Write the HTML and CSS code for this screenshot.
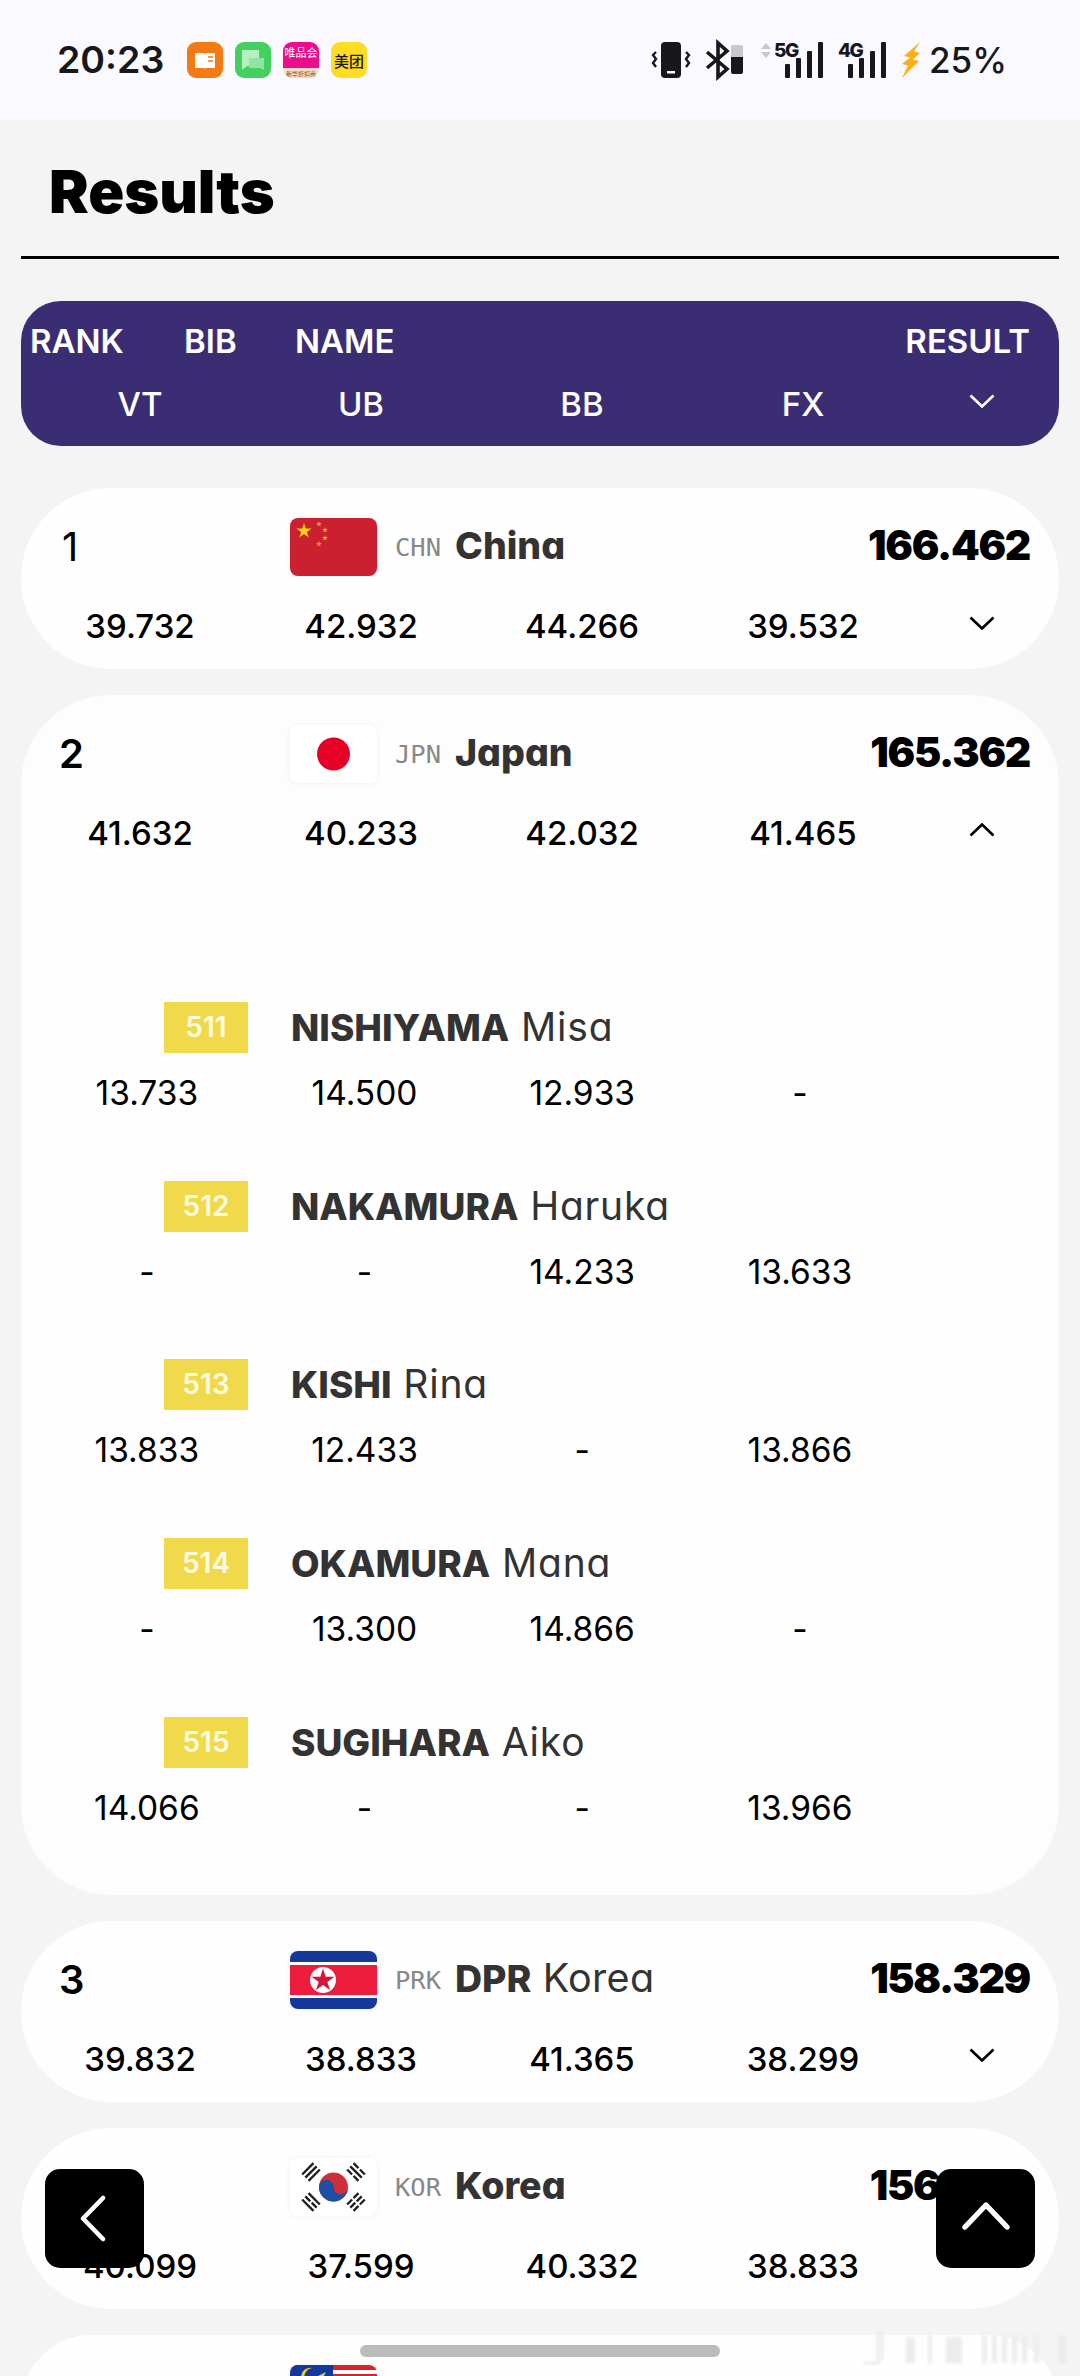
FILE: index.html
```html
<!DOCTYPE html>
<html lang="en">
<head>
<meta charset="utf-8">
<title>Results</title>
<link rel="stylesheet" href="styles.css">
</head>
<body>
<div class="screen">
  <header class="status">
    <span class="time">20:23</span>
    <div class="apps">
      <span class="app app-book">
        <svg width="36" height="36" viewBox="0 0 36 36"><path d="M8 11h9l1 1 1-1h9v15h-9l-1 1-1-1H8z" fill="#fff"/><path d="M21 15h5M21 19h5" stroke="#f47a12" stroke-width="1.6"/></svg>
      </span>
      <span class="app app-msg">
        <svg width="36" height="36" viewBox="0 0 36 36"><path d="M7 8h17v16H12l-5 4z" fill="#b8eec4"/><path d="M14 16h15v12l-4-2H14z" fill="#8fe5a2"/></svg>
      </span>
      <span class="app app-vip"><span class="vip-top">唯品会</span><span class="vip-bottom">新华折扣商</span></span>
      <span class="app app-mt">美团</span>
    </div>
    <div class="sys">
      <svg class="sys-vib" width="38" height="36" viewBox="0 0 38 36"><rect x="9" y="0" width="20" height="36" rx="4" fill="#18181c"/><rect x="15" y="29" width="8" height="2.5" fill="#fff"/><path d="M4 10l-3 3 3 4-3 4 3 4M34 10l3 3-3 4 3 4-3 4" fill="none" stroke="#18181c" stroke-width="2.4"/></svg>
      <svg class="sys-bt" width="38" height="36" viewBox="0 0 38 36"><path d="M1 10l20 17-9 8V1l9 8L1 26" fill="none" stroke="#18181c" stroke-width="3.6"/><path d="M25 5a2 2 0 0 1 2-2h8a2 2 0 0 1 2 2v10H25z" fill="#c8c8cc"/><path d="M25 15h12v15a2 2 0 0 1-2 2h-8a2 2 0 0 1-2-2z" fill="#18181c"/></svg>
      <svg class="sys-net" width="64" height="36" viewBox="0 0 64 36"><path d="M0 7l5-6 5 6zM0 10l5 6 5-6z" fill="#c8c8cc"/><text x="13" y="15" class="net-label">5G</text><rect x="24" y="22" width="5" height="14" rx="1" fill="#18181c"/><rect x="35" y="16" width="5" height="20" rx="1" fill="#18181c"/><rect x="46" y="9" width="5" height="27" rx="1" fill="#18181c"/><rect x="57" y="0" width="5" height="36" rx="1" fill="#18181c"/></svg>
      <svg class="sys-net2" width="50" height="36" viewBox="0 0 50 36"><text x="0" y="15" class="net-label">4G</text><rect x="10" y="22" width="5" height="14" rx="1" fill="#18181c"/><rect x="21" y="16" width="5" height="20" rx="1" fill="#18181c"/><rect x="32" y="9" width="5" height="27" rx="1" fill="#18181c"/><rect x="43" y="0" width="5" height="36" rx="1" fill="#18181c"/></svg>
      <svg class="sys-bolt" width="20" height="36" viewBox="0 0 20 36"><path d="M19 0L3 14l6 1.5L1 22l6 1.5L1 36l17-17-6-1.5 7-6.5-6-1.5z" fill="#fbb018"/></svg>
      <span class="battery">25%</span>
    </div>
  </header>

  <main class="page">
    <h1 class="title">Results</h1>
    <hr class="rule">

    <section class="table-head">
      <div class="head-top"><span>RANK</span><span>BIB</span><span>NAME</span><span>RESULT</span></div>
      <div class="splits">
        <span>VT</span><span>UB</span><span>BB</span><span>FX</span>
        <svg class="chev" width="26" height="14" viewBox="0 0 26 14"><path d="M1.5 1.5L13 12.5 24.5 1.5" fill="none" stroke="#fff" stroke-width="2.6"/></svg>
      </div>
    </section>

    <article class="card">
      <div class="top">
        <span class="rank rank-light">1</span>
        <svg class="flag" width="87" height="58" viewBox="0 0 87 58"><rect width="87" height="58" fill="#cb2030"/><g fill="#fcd116"><polygon transform="translate(14 13) scale(8)" points="0,-1 .225,-.309 .951,-.309 .363,.118 .588,.809 0,.382 -.588,.809 -.363,.118 -.951,-.309 -.225,-.309"/></g><g fill="#f6a63a"><polygon transform="translate(29 6) scale(3)" points="0,-1 .225,-.309 .951,-.309 .363,.118 .588,.809 0,.382 -.588,.809 -.363,.118 -.951,-.309 -.225,-.309"/><polygon transform="translate(35 12) scale(3)" points="0,-1 .225,-.309 .951,-.309 .363,.118 .588,.809 0,.382 -.588,.809 -.363,.118 -.951,-.309 -.225,-.309"/><polygon transform="translate(35 20) scale(3)" points="0,-1 .225,-.309 .951,-.309 .363,.118 .588,.809 0,.382 -.588,.809 -.363,.118 -.951,-.309 -.225,-.309"/><polygon transform="translate(29 26) scale(3)" points="0,-1 .225,-.309 .951,-.309 .363,.118 .588,.809 0,.382 -.588,.809 -.363,.118 -.951,-.309 -.225,-.309"/></g></svg>
        <span class="code">CHN</span>
        <span class="country"><b>China</b></span>
        <span class="total">166.462</span>
      </div>
      <div class="splits">
        <span>39.732</span><span>42.932</span><span>44.266</span><span>39.532</span>
        <svg class="chev" width="26" height="14" viewBox="0 0 26 14"><path d="M1.5 1.5L13 12.5 24.5 1.5" fill="none" stroke="#000" stroke-width="2.6"/></svg>
      </div>
    </article>

    <article class="card card-open">
      <div class="top">
        <span class="rank">2</span>
        <svg class="flag" width="87" height="58" viewBox="0 0 87 58"><rect width="87" height="58" fill="#fff"/><circle cx="43.5" cy="29" r="16.5" fill="#e60026"/></svg>
        <span class="code">JPN</span>
        <span class="country"><b>Japan</b></span>
        <span class="total">165.362</span>
      </div>
      <div class="splits">
        <span>41.632</span><span>40.233</span><span>42.032</span><span>41.465</span>
        <svg class="chev" width="26" height="14" viewBox="0 0 26 14"><path d="M1.5 12.5L13 1.5 24.5 12.5" fill="none" stroke="#000" stroke-width="2.6"/></svg>
      </div>
      <div class="players">
        <div class="player">
          <div class="player-id"><span class="bib">511</span><span class="player-name"><b>NISHIYAMA</b> Misa</span></div>
          <div class="player-scores"><span>13.733</span><span>14.500</span><span>12.933</span><span>-</span></div>
        </div>
        <div class="player">
          <div class="player-id"><span class="bib">512</span><span class="player-name"><b>NAKAMURA</b> Haruka</span></div>
          <div class="player-scores"><span>-</span><span>-</span><span>14.233</span><span>13.633</span></div>
        </div>
        <div class="player">
          <div class="player-id"><span class="bib">513</span><span class="player-name"><b>KISHI</b> Rina</span></div>
          <div class="player-scores"><span>13.833</span><span>12.433</span><span>-</span><span>13.866</span></div>
        </div>
        <div class="player">
          <div class="player-id"><span class="bib">514</span><span class="player-name"><b>OKAMURA</b> Mana</span></div>
          <div class="player-scores"><span>-</span><span>13.300</span><span>14.866</span><span>-</span></div>
        </div>
        <div class="player">
          <div class="player-id"><span class="bib">515</span><span class="player-name"><b>SUGIHARA</b> Aiko</span></div>
          <div class="player-scores"><span>14.066</span><span>-</span><span>-</span><span>13.966</span></div>
        </div>
      </div>
    </article>

    <article class="card">
      <div class="top">
        <span class="rank">3</span>
        <svg class="flag" width="87" height="58" viewBox="0 0 87 58"><rect width="87" height="58" fill="#15389b"/><rect y="11" width="87" height="36" fill="#fff"/><rect y="14" width="87" height="30" fill="#ed1c3d"/><circle cx="33" cy="29" r="13" fill="#fff"/><polygon transform="translate(33 29.5) scale(12)" fill="#d8163a" points="0,-1 .225,-.309 .951,-.309 .363,.118 .588,.809 0,.382 -.588,.809 -.363,.118 -.951,-.309 -.225,-.309"/></svg>
        <span class="code">PRK</span>
        <span class="country"><b>DPR</b> Korea</span>
        <span class="total">158.329</span>
      </div>
      <div class="splits">
        <span>39.832</span><span>38.833</span><span>41.365</span><span>38.299</span>
        <svg class="chev" width="26" height="14" viewBox="0 0 26 14"><path d="M1.5 1.5L13 12.5 24.5 1.5" fill="none" stroke="#000" stroke-width="2.6"/></svg>
      </div>
    </article>

    <article class="card">
      <div class="top">
        <span class="rank">4</span>
        <svg class="flag" width="87" height="58" viewBox="0 0 87 58"><rect width="87" height="58" fill="#fff"/><circle cx="43.5" cy="29" r="14.5" fill="#cd2e3a"/><path d="M29 29a7.25 7.25 0 0 1 14.5 0 7.25 7.25 0 0 0 14.5 0 14.5 14.5 0 0 1-29 0z" fill="#1d4fa3"/><g stroke="#222" stroke-width="2.4"><g transform="translate(21 14) rotate(-45)"><path d="M-8-4.5H8M-8 0H8M-8 4.5H8"/></g><g transform="translate(66 14) rotate(45)"><path d="M-8-4.5H-1M1-4.5H8M-8 0H8M-8 4.5H-1M1 4.5H8"/></g><g transform="translate(21 44) rotate(45)"><path d="M-8-4.5H8M-8 0H-1M1 0H8M-8 4.5H8"/></g><g transform="translate(66 44) rotate(-45)"><path d="M-8-4.5H-1M1-4.5H8M-8 0H-1M1 0H8M-8 4.5H-1M1 4.5H8"/></g></g></svg>
        <span class="code">KOR</span>
        <span class="country"><b>Korea</b></span>
        <span class="total">156.863</span>
      </div>
      <div class="splits">
        <span>40.099</span><span>37.599</span><span>40.332</span><span>38.833</span>
        <svg class="chev chev-under" width="26" height="14" viewBox="0 0 26 14"><path d="M1.5 1.5L13 12.5 24.5 1.5" fill="none" stroke="#000" stroke-width="2.6"/></svg>
      </div>
    </article>

    <article class="card">
      <div class="top">
        <span class="rank">5</span>
        <svg class="flag" width="87" height="58" viewBox="0 0 87 58"><rect width="87" height="58" fill="#fff"/><rect y="0" width="87" height="5" fill="#d8232f"/><rect y="9" width="87" height="5" fill="#d8232f"/><rect y="18" width="87" height="5" fill="#d8232f"/><rect width="43" height="30" fill="#15389b"/><path d="M22 3a9 9 0 1 0 2 17 8 8 0 1 1-2-17z" fill="#fcd116"/><path d="M26 12l10-5-5 9z" fill="#fcd116"/></svg>
        <span class="code">MAS</span>
        <span class="country"><b>Malaysia</b></span>
      </div>
    </article>
  </main>

  <button class="float float-left" type="button" aria-label="Back"><svg width="99" height="99" viewBox="0 0 99 99"><path d="M58 29L38 49.5 58 70" fill="none" stroke="#fff" stroke-width="4.6" stroke-linecap="round" stroke-linejoin="round"/></svg></button>
  <button class="float float-right" type="button" aria-label="Back to top"><svg width="99" height="99" viewBox="0 0 99 99"><path d="M29 58L50 36 71 58" fill="none" stroke="#fff" stroke-width="5.4" stroke-linecap="round" stroke-linejoin="round"/></svg></button>
  <div class="home-bar"></div>
  <svg class="watermark" width="208" height="34" viewBox="0 0 208 34"><path d="M16 31V4a2 2 0 0 1 4 0v25M2 32h16" fill="none" stroke="#e4e4e4" stroke-width="2"/><g fill="#ececec"><rect x="44" y="6" width="9" height="26"/><rect x="66" y="4" width="4" height="28"/><rect x="84" y="6" width="16" height="26"/><rect x="120" y="4" width="5" height="28"/><rect x="130" y="4" width="5" height="28"/><rect x="140" y="4" width="5" height="28"/><rect x="150" y="4" width="5" height="28"/><rect x="160" y="4" width="5" height="28"/><rect x="172" y="4" width="5" height="28"/><rect x="196" y="4" width="8" height="28"/></g></svg>
</div>
</body>
</html>
```

FILE: styles.css
```css
* { box-sizing: border-box; }
html, body { margin: 0; padding: 0; }
body {
  font-family: Inter, "Noto Sans", "Noto Sans CJK SC", sans-serif;
  font-feature-settings: "cv11" 1;
  background: #f4f4f4;
  color: #000;
}
.screen {
  position: relative;
  width: 1080px;
  height: 2376px;
  overflow: hidden;
  background: #f4f4f4;
}

/* status bar */
.status {
  display: flex;
  align-items: center;
  height: 120px;
  padding: 0 0 0 57px;
  background: #f9f9ff;
  color: #18181c;
}
.time { font-size: 37.5px; font-weight: 600; width: 130px; line-height: 36px; }
.apps { display: flex; gap: 12px; width: 465px; }
.app {
  display: flex;
  align-items: center;
  justify-content: center;
  width: 36px;
  height: 36px;
  border-radius: 9px;
  overflow: hidden;
}
.app-book { background: #f47a12; }
.app-msg { background: #43d05f; }
.app-vip {
  flex-direction: column;
  background: linear-gradient(#ec0c8e 72%, #f6dcc8 72%);
  color: #fff;
  font-family: "Noto Sans CJK SC", sans-serif;
}
.vip-top { font-size: 11px; line-height: 14px; margin-top: 2px; }
.vip-bottom { font-size: 6px; line-height: 8px; color: #7a4a20; margin-top: 11px; white-space: nowrap; }
.app-mt {
  background: #ffdd22;
  color: #18181c;
  font-family: "Noto Sans CJK SC", sans-serif;
  font-size: 15px;
  font-weight: 500;
}
.sys { display: flex; align-items: center; }
.sys svg { overflow: visible; }
.sys-bt { margin-left: 16px; }
.sys-net { margin-left: 17px; }
.sys-net2 { margin-left: 13px; }
.sys-bolt { margin-left: 13px; }
.net-label { font-family: Inter, sans-serif; font-size: 19px; font-weight: 800; letter-spacing: -1.5px; fill: #18181c; }
.battery { font-size: 35px; font-weight: 500; margin-left: 8px; line-height: 36px; }

/* page */
.page { padding: 0 21px; }
.title {
  margin: 0;
  padding: 35px 0 0 28px;
  font-size: 59.5px;
  font-weight: 900;
  line-height: 72px;
  height: 136px;
}
.rule { margin: 0; height: 3px; border: 0; background: #000; }

.table-head {
  margin-top: 42px;
  height: 145px;
  padding-top: 20px;
  border-radius: 40px;
  background: #3b2d73;
  color: #fff;
  font-size: 33px;
  font-weight: 600;
}
.head-top {
  display: grid;
  grid-template-columns: 154px 111px 1fr auto;
  padding: 0 29px 0 9px;
  line-height: 40px;
  margin-bottom: 23px;
}
.table-head .splits { font-weight: 500; }

.splits {
  display: grid;
  grid-template-columns: repeat(4, 221px) 137px;
  padding-left: 8.5px;
  align-items: center;
  justify-items: center;
  font-size: 33px;
  font-weight: 500;
  line-height: 40px;
}
.chev { margin-top: -7px; }
.chev-under { margin-top: -14px; }

.card {
  margin-top: 26px;
  padding: 30px 0 23px;
  border-radius: 90px;
  background: #fefefe;
}
.table-head + .card { margin-top: 42px; }
.card-open { background: #fdfdfd; padding-bottom: 42.5px; }
.top {
  display: flex;
  align-items: center;
  height: 58px;
  padding-right: 29px;
  margin-bottom: 30px;
}
.rank { width: 269px; padding-left: 38px; font-size: 40px; font-weight: 600; line-height: 58px; }
.rank-light { font-weight: 400; padding-left: 41px; }
.flag {
  flex-shrink: 0;
  border-radius: 8px;
  box-shadow: 0 0 6px rgba(0, 0, 0, .06);
}
.code {
  margin-left: 18px;
  width: 46px;
  color: #888;
  font-family: "DejaVu Sans Mono", monospace;
  font-size: 25.5px;
  line-height: 36px;
}
.country {
  margin-left: 14px;
  color: #333;
  font-size: 39.5px;
  font-weight: 400;
  letter-spacing: .3px;
  line-height: 44px;
  margin-top: -3px;
}
.country b { font-size: 37.5px; font-weight: 800; letter-spacing: 0; }
.total { margin-left: auto; font-size: 41px; font-weight: 900; letter-spacing: -1.3px; line-height: 48px; margin-top: -4px; }

/* players */
.players { margin-top: 130px; padding: 0 13px; }
.player {
  height: 154.7px;
  margin-bottom: 24px;
  padding-top: 19px;
  border-radius: 60px;
  background: #fefefe;
}
.player:last-child { margin-bottom: 0; }
.player-id { display: flex; align-items: center; padding-left: 130px; height: 51px; }
.bib {
  width: 84px;
  height: 51px;
  background: #f1d94c;
  color: #fffbe0;
  font-size: 28px;
  font-weight: 600;
  line-height: 51px;
  text-align: center;
}
.player-name { margin-left: 43px; color: #333; font-size: 39px; font-weight: 400; letter-spacing: .8px; line-height: 44px; white-space: pre; }
.player-name b { font-size: 37px; font-weight: 800; letter-spacing: 0; }
.player-scores {
  display: grid;
  grid-template-columns: repeat(4, 217.7px);
  padding-left: 4px;
  margin-top: 20px;
  justify-items: center;
  font-size: 33.5px;
  font-weight: 400;
  line-height: 40px;
}

/* overlays */
.float {
  position: absolute;
  top: 2169px;
  width: 99px;
  height: 99px;
  padding: 0;
  border: 0;
  border-radius: 15px;
  background: #000;
}
.float svg { display: block; }
.float-left { left: 45px; }
.float-right { left: 936px; }
.home-bar {
  position: absolute;
  left: 360px;
  top: 2345px;
  width: 360px;
  height: 12px;
  border-radius: 6px;
  background: #bbb;
}
.watermark { position: absolute; left: 862px; top: 2331px; filter: blur(1.5px); }
```
